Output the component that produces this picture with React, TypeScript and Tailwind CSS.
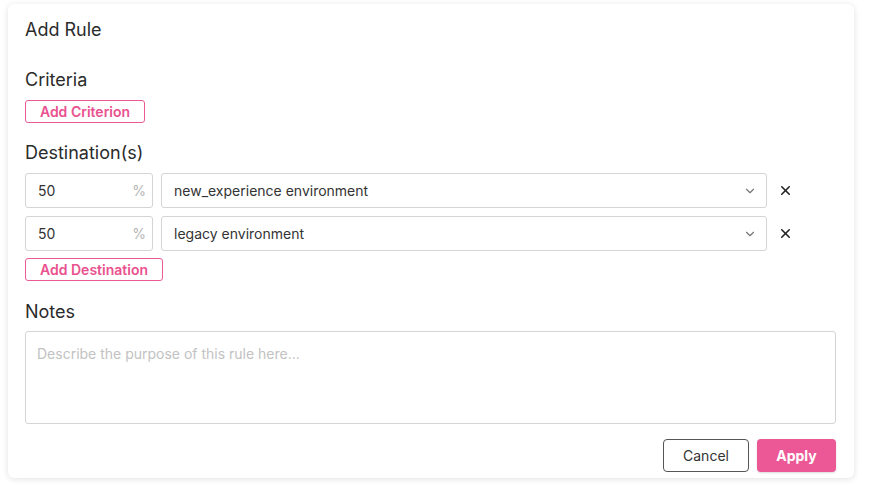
import React from 'react';
import { ChevronDown, X } from 'lucide-react';

const destinations = [
    { pct: '50', env: 'new_experience environment' },
    { pct: '50', env: 'legacy environment' },
];

const OutlineButton: React.FC<{ label: string; width: string }> = ({ label, width }) => (
    <button
        className={`${width} h-[23px] rounded-[3px] border border-[#ec5a96] text-[#e9518e] text-[14px] font-semibold leading-none flex items-center justify-center`}
    >
        {label}
    </button>
);

export default function App() {
    return (
        <div className="w-[872px] h-[485px] bg-white pt-[4px] pl-[8px]" style={{ fontFamily: 'Inter, "Noto Sans", sans-serif' }}>
            <div className="w-[846px] h-[474px] rounded-[6px] bg-white shadow-[0_1px_6px_rgba(0,0,0,0.12)] pl-[17px] pr-[18px] pt-[14px] text-[#2b2b2b]">
                <h2 className="text-[18px] leading-[24px]">Add Rule</h2>

                <h3 className="text-[18px] leading-[24px] mt-[26px]">Criteria</h3>
                <div className="mt-[8px]">
                    <OutlineButton label="Add Criterion" width="w-[120px]" />
                </div>

                <h3 className="text-[18px] leading-[24px] mt-[18px]">Destination(s)</h3>
                <div className="mt-[8px] flex flex-col gap-[8px]">
                    {destinations.map((d, i) => (
                        <div key={i} className="flex items-center">
                            <div className="w-[128px] h-[35px] rounded-[3px] border border-[#d4d4d4] flex items-center justify-between pl-[12px] pr-[6px] text-[14px]">
                                <span className="text-[#333]">{d.pct}</span>
                                <span className="text-[#b5b5b5] text-[14px]">%</span>
                            </div>
                            <div className="ml-[8px] w-[606px] h-[35px] rounded-[3px] border border-[#d4d4d4] flex items-center justify-between pl-[12px] pr-[9px] text-[14px] text-[#333]">
                                <span>{d.env}</span>
                                <ChevronDown className="w-[14px] h-[14px] text-[#777]" strokeWidth={2} />
                            </div>
                            <X className="ml-[11px] w-[15px] h-[15px] text-[#222]" strokeWidth={2.5} />
                        </div>
                    ))}
                </div>
                <div className="mt-[7px]">
                    <OutlineButton label="Add Destination" width="w-[138px]" />
                </div>

                <h3 className="text-[18px] leading-[24px] mt-[19px]">Notes</h3>
                <textarea
                    className="mt-[7px] block w-[811px] h-[93px] rounded-[3px] border border-[#d4d4d4] px-[11px] py-[11px] text-[14px] resize-none outline-none placeholder:text-[#c2c2c2]"
                    placeholder="Describe the purpose of this rule here..."
                />

                <div className="mt-[15px] flex justify-end gap-[8px]">
                    <button className="w-[86px] h-[33px] rounded-[4px] border border-[#555] text-[14px] text-[#333] bg-white">
                        Cancel
                    </button>
                    <button className="w-[79px] h-[33px] rounded-[4px] bg-[#ec5896] text-white text-[14px] font-bold shadow-[0_1px_2px_rgba(0,0,0,0.15)]">
                        Apply
                    </button>
                </div>
            </div>
        </div>
    );
}
